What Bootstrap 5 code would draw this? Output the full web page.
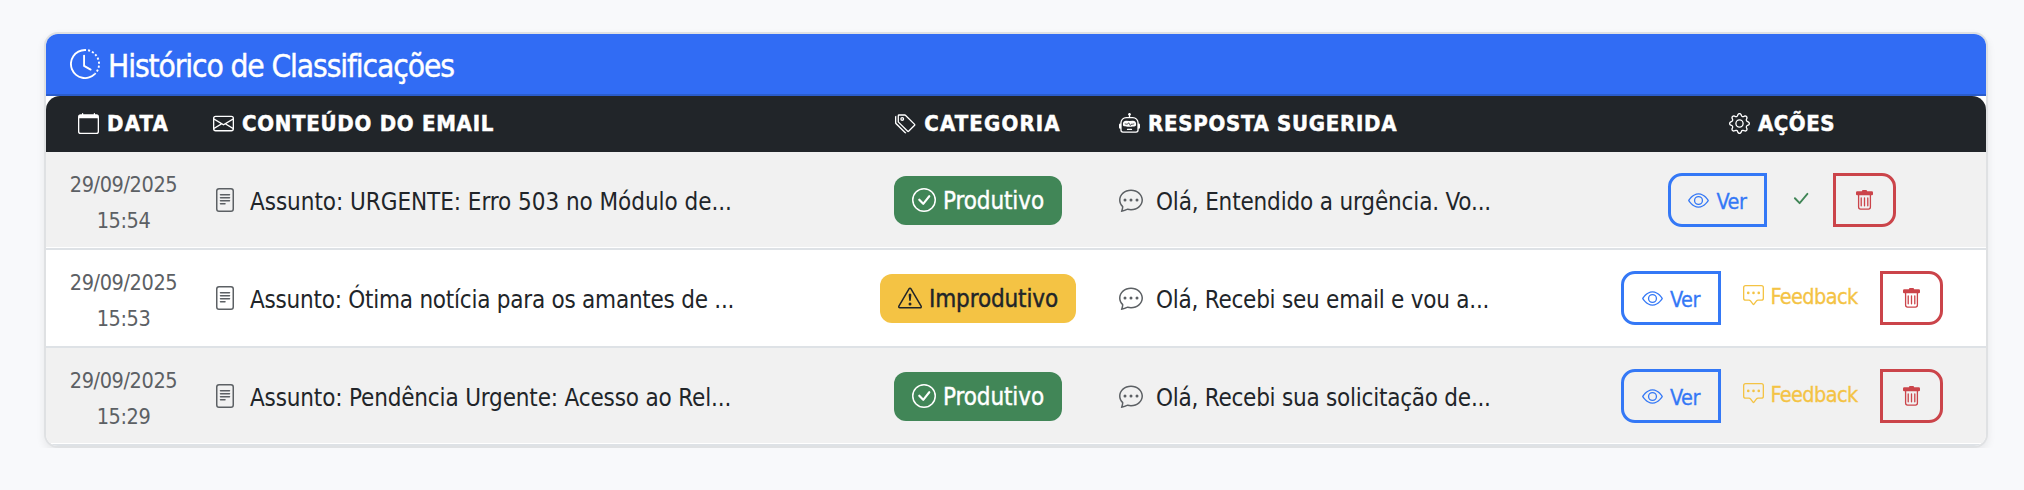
<!DOCTYPE html>
<html lang="pt-BR">
<head>
<meta charset="utf-8">
<meta name="viewport" content="width=device-width, initial-scale=1">
<title>Histórico de Classificações</title>
<link href="https://cdn.jsdelivr.net/npm/bootstrap@5.3.0/dist/css/bootstrap.min.css" rel="stylesheet">
<style>
body{background:#f8f9fb;font-family:"DejaVu Sans Condensed","DejaVu Sans",sans-serif;color:#212529;padding:32px 36px 0 44px}
.history{width:1944px;border:2px solid #dfe1e3;border-radius:14px;overflow:hidden;background:#fff;box-shadow:0 4px 8px rgba(0,0,0,.075)}
.history>.card-header{height:62px;padding:0 0 0 24px;background:#316cf4;border-bottom:2px solid #2b5dcb;border-radius:0;font-size:31.5px;line-height:60px;letter-spacing:-1.14px;-webkit-text-stroke:.4px}
.history .table{table-layout:fixed;width:1940px;line-height:36px;border-collapse:separate;border-spacing:0}
.history th{height:56px;padding:0 12px;background:#212529;color:#fff;border:0;font-size:22px;line-height:56px;white-space:nowrap;-webkit-text-stroke:.5px}
.history th:first-child{border-top-left-radius:14px}
.history th:last-child{border-top-right-radius:14px}
.history td{height:98px;padding:0 12px;border-bottom:2px solid #dee2e6;font-size:24px;white-space:nowrap;background:transparent;box-shadow:none}
.history tbody tr:nth-child(odd) td{background:linear-gradient(#f1f1f1,#f1f1f1) 0 0/100% 95px no-repeat}
.history .when{font-size:21.5px;letter-spacing:-.4px;color:#5c6064;padding-top:5px}
.ico{fill:currentColor;stroke:none;flex:none;display:block}
.i21{width:21px;height:21px}
.i24{width:24px;height:24px}
.i30{width:30px;height:30px}
th .ico{margin:0 8px 2px 0}
.muted{color:#5c6064}
.entry{gap:13px}
.entry span{position:relative;top:2px}
.tag{height:49px;border-radius:12px;padding:0 18px;gap:7px;letter-spacing:-.1px;-webkit-text-stroke:.4px}
.tag span{padding-top:2px}
.tag-ok{background:#418657;color:#fff}
.tag-warn{background:#f4c344;color:#212529;letter-spacing:-.12px}
.act{height:54px;font-size:21.5px;line-height:48px;gap:7px;border:3px solid;padding:0;letter-spacing:-.46px}
.act span{-webkit-text-stroke:.3px;padding-top:3px}
.view{color:#3478f6;width:99px;border-radius:14px 0 0 14px}
.row-wide .view{width:100px}
.del{color:#cb444a;width:63px;border-radius:0 14px 14px 0}
.mid{color:#418657;width:66px}
.fb{color:#f4c344;width:159px;letter-spacing:-.6px;font-size:21.5px;gap:6px}
.fb span{-webkit-text-stroke:.3px;margin-top:-2px}
.fb .ico{margin-top:-5px}
.s1{letter-spacing:-.05px}.s2{letter-spacing:-.24px}.s3{letter-spacing:-.16px}.s4{letter-spacing:-.16px}
.h1x{letter-spacing:1.15px}.h2x{letter-spacing:.72px}.h3x{letter-spacing:.5px}
</style>
</head>
<body>
<svg class="d-none" xmlns="http://www.w3.org/2000/svg">
<symbol id="clock" viewBox="0 0 16 16"><path d="M8.515 1.019A7 7 0 0 0 8 1V0a8 8 0 0 1 .589.022zm2.004.45a7 7 0 0 0-.985-.299l.219-.976q.576.129 1.126.342zm1.37.71a7 7 0 0 0-.439-.27l.493-.87a8 8 0 0 1 .979.654l-.615.789a7 7 0 0 0-.418-.302zm1.834 1.79a7 7 0 0 0-.653-.796l.724-.69q.406.429.747.91zm.744 1.352a7 7 0 0 0-.214-.468l.893-.45a8 8 0 0 1 .45 1.088l-.95.313a7 7 0 0 0-.179-.483m.53 2.507a7 7 0 0 0-.1-1.025l.985-.17q.1.58.116 1.17zm-.131 1.538q.05-.254.081-.51l.993.123a8 8 0 0 1-.23 1.155l-.964-.267q.069-.247.12-.501m-.952 2.379q.276-.436.486-.908l.914.405q-.24.54-.555 1.038zm-.964 1.205q.183-.183.35-.378l.758.653a8 8 0 0 1-.401.432z"/><path d="M8 1a7 7 0 1 0 4.95 11.95l.707.707A8.001 8.001 0 1 1 8 0z"/><path d="M7.5 3a.5.5 0 0 1 .5.5v5.21l3.248 1.856a.5.5 0 0 1-.496.868l-3.5-2A.5.5 0 0 1 7 9V3.5a.5.5 0 0 1 .5-.5"/></symbol>
<symbol id="calendar" viewBox="0 0 16 16"><path d="M3.5 0a.5.5 0 0 1 .5.5V1h8V.5a.5.5 0 0 1 1 0V1h1a2 2 0 0 1 2 2v11a2 2 0 0 1-2 2H2a2 2 0 0 1-2-2V3a2 2 0 0 1 2-2h1V.5a.5.5 0 0 1 .5-.5M1 4v10a1 1 0 0 0 1 1h12a1 1 0 0 0 1-1V4z"/></symbol>
<symbol id="envelope" viewBox="0 0 16 16"><path d="M0 4a2 2 0 0 1 2-2h12a2 2 0 0 1 2 2v8a2 2 0 0 1-2 2H2a2 2 0 0 1-2-2zm2-1a1 1 0 0 0-1 1v.217l7 4.2 7-4.2V4a1 1 0 0 0-1-1zm13 2.383-4.708 2.825L15 11.105zm-.034 6.876-5.64-3.471L8 9.583l-1.326-.795-5.64 3.47A1 1 0 0 0 2 13h12a1 1 0 0 0 .966-.741M1 11.105l4.708-2.897L1 5.383z"/></symbol>
<symbol id="tags" viewBox="0 0 16 16"><path d="M3 2v4.586l7 7L14.586 9l-7-7zM2 2a1 1 0 0 1 1-1h4.586a1 1 0 0 1 .707.293l7 7a1 1 0 0 1 0 1.414l-4.586 4.586a1 1 0 0 1-1.414 0l-7-7A1 1 0 0 1 2 6.586z"/><path d="M5.5 5a.5.5 0 1 1 0-1 .5.5 0 0 1 0 1m0 1a1.5 1.5 0 1 0 0-3 1.5 1.5 0 0 0 0 3M1 7.086a1 1 0 0 0 .293.707L8.75 15.25l-.043.043a1 1 0 0 1-1.414 0l-7-7A1 1 0 0 1 0 7.586V3a1 1 0 0 1 1-1z"/></symbol>
<symbol id="robot" viewBox="0 0 16 16"><path d="M6 12.5a.5.5 0 0 1 .5-.5h3a.5.5 0 0 1 0 1h-3a.5.5 0 0 1-.5-.5M3 8.062C3 6.76 4.235 5.765 5.53 5.886a26.6 26.6 0 0 0 4.94 0C11.765 5.765 13 6.76 13 8.062v1.157a.93.93 0 0 1-.765.935c-.845.147-2.34.346-4.235.346s-3.39-.2-4.235-.346A.93.93 0 0 1 3 9.219zm4.542-.827a.25.25 0 0 0-.217.068l-.92.9a25 25 0 0 1-1.871-.183.25.25 0 0 0-.068.495c.55.076 1.232.149 2.02.193a.25.25 0 0 0 .189-.071l.754-.736.847 1.71a.25.25 0 0 0 .404.062l.932-.97a25 25 0 0 0 1.922-.188.25.25 0 0 0-.068-.495c-.538.074-1.207.145-1.98.189a.25.25 0 0 0-.166.076l-.754.785-.842-1.7a.25.25 0 0 0-.182-.135"/><path d="M8.5 1.866a1 1 0 1 0-1 0V3h-2A4.5 4.5 0 0 0 1 7.5V8a1 1 0 0 0-1 1v2a1 1 0 0 0 1 1v1a2 2 0 0 0 2 2h10a2 2 0 0 0 2-2v-1a1 1 0 0 0 1-1V9a1 1 0 0 0-1-1v-.5A4.5 4.5 0 0 0 10.5 3h-2zM14 7.5V13a1 1 0 0 1-1 1H3a1 1 0 0 1-1-1V7.5A3.5 3.5 0 0 1 5.5 4h5A3.5 3.5 0 0 1 14 7.5"/></symbol>
<symbol id="gear" viewBox="0 0 16 16"><path d="M8 4.754a3.246 3.246 0 1 0 0 6.492 3.246 3.246 0 0 0 0-6.492M5.754 8a2.246 2.246 0 1 1 4.492 0 2.246 2.246 0 0 1-4.492 0"/><path d="M9.796 1.343c-.527-1.79-3.065-1.79-3.592 0l-.094.319a.873.873 0 0 1-1.255.52l-.292-.16c-1.64-.892-3.433.902-2.54 2.541l.159.292a.873.873 0 0 1-.52 1.255l-.319.094c-1.79.527-1.79 3.065 0 3.592l.319.094a.873.873 0 0 1 .52 1.255l-.16.292c-.892 1.64.901 3.434 2.541 2.54l.292-.159a.873.873 0 0 1 1.255.52l.094.319c.527 1.79 3.065 1.79 3.592 0l.094-.319a.873.873 0 0 1 1.255-.52l.292.16c1.64.893 3.434-.902 2.54-2.541l-.159-.292a.873.873 0 0 1 .52-1.255l.319-.094c1.79-.527 1.79-3.065 0-3.592l-.319-.094a.873.873 0 0 1-.52-1.255l.16-.292c.893-1.64-.902-3.433-2.541-2.54l-.292.159a.873.873 0 0 1-1.255-.52zm-2.633.283c.246-.835 1.428-.835 1.674 0l.094.319a1.873 1.873 0 0 0 2.693 1.115l.291-.16c.764-.415 1.6.42 1.184 1.185l-.159.292a1.873 1.873 0 0 0 1.116 2.692l.318.094c.835.246.835 1.428 0 1.674l-.319.094a1.873 1.873 0 0 0-1.115 2.693l.16.291c.415.764-.42 1.6-1.185 1.184l-.291-.159a1.873 1.873 0 0 0-2.693 1.116l-.094.318c-.246.835-1.428.835-1.674 0l-.094-.319a1.873 1.873 0 0 0-2.692-1.115l-.292.16c-.764.415-1.6-.42-1.184-1.185l.159-.291A1.873 1.873 0 0 0 1.945 8.93l-.319-.094c-.835-.246-.835-1.428 0-1.674l.319-.094A1.873 1.873 0 0 0 3.06 4.377l-.16-.292c-.415-.764.42-1.6 1.185-1.184l.292.159a1.873 1.873 0 0 0 2.692-1.115z"/></symbol>
<symbol id="file" viewBox="0 0 16 16"><path d="M5 4a.5.5 0 0 0 0 1h6a.5.5 0 0 0 0-1zm-.5 2.5A.5.5 0 0 1 5 6h6a.5.5 0 0 1 0 1H5a.5.5 0 0 1-.5-.5M5 8a.5.5 0 0 0 0 1h6a.5.5 0 0 0 0-1zm0 2a.5.5 0 0 0 0 1h3a.5.5 0 0 0 0-1z"/><path d="M2 2a2 2 0 0 1 2-2h8a2 2 0 0 1 2 2v12a2 2 0 0 1-2 2H4a2 2 0 0 1-2-2zm10-1H4a1 1 0 0 0-1 1v12a1 1 0 0 0 1 1h8a1 1 0 0 0 1-1V2a1 1 0 0 0-1-1"/></symbol>
<symbol id="chat" viewBox="0 0 16 16"><path d="M5 8a1 1 0 1 1-2 0 1 1 0 0 1 2 0m4 0a1 1 0 1 1-2 0 1 1 0 0 1 2 0m3 1a1 1 0 1 0 0-2 1 1 0 0 0 0 2"/><path d="m2.165 15.803.02-.004c1.83-.363 2.948-.842 3.468-1.105A9 9 0 0 0 8 15c4.418 0 8-3.134 8-7s-3.582-7-8-7-8 3.134-8 7c0 1.76.743 3.37 1.97 4.6a10.4 10.4 0 0 1-.524 2.318l-.003.011a11 11 0 0 1-.244.637c-.079.186.074.394.273.362a22 22 0 0 0 .693-.125m.8-3.108a1 1 0 0 0-.287-.801C1.618 10.83 1 9.468 1 8c0-3.192 3.004-6 7-6s7 2.808 7 6-3.004 6-7 6a8 8 0 0 1-2.088-.272 1 1 0 0 0-.711.074c-.387.196-1.24.57-2.634.893a11 11 0 0 0 .398-2"/></symbol>
<symbol id="ok" viewBox="0 0 16 16"><path d="M8 15A7 7 0 1 1 8 1a7 7 0 0 1 0 14m0 1A8 8 0 1 0 8 0a8 8 0 0 0 0 16"/><path d="m10.97 4.97-.02.022-3.473 4.425-2.093-2.094a.75.75 0 0 0-1.06 1.06L6.97 11.03a.75.75 0 0 0 1.079-.02l3.992-4.99a.75.75 0 0 0-1.071-1.05"/></symbol>
<symbol id="warn" viewBox="0 0 16 16"><path d="M7.938 2.016A.13.13 0 0 1 8.002 2a.13.13 0 0 1 .063.016.15.15 0 0 1 .054.057l6.857 11.667c.036.06.035.124.002.183a.2.2 0 0 1-.054.06.1.1 0 0 1-.066.017H1.146a.1.1 0 0 1-.066-.017.2.2 0 0 1-.054-.06.18.18 0 0 1 .002-.183L7.884 2.073a.15.15 0 0 1 .054-.057m1.044-.45a1.13 1.13 0 0 0-1.96 0L.165 13.233c-.457.778.091 1.767.98 1.767h13.713c.889 0 1.438-.99.98-1.767z"/><path d="M7.002 12a1 1 0 1 1 2 0 1 1 0 0 1-2 0M7.1 5.995a.905.905 0 1 1 1.8 0l-.35 3.507a.552.552 0 0 1-1.1 0z"/></symbol>
<symbol id="eye" viewBox="0 0 16 16"><path d="M16 8s-3-5.5-8-5.5S0 8 0 8s3 5.5 8 5.5S16 8 16 8M1.173 8a13 13 0 0 1 1.66-2.043C4.12 4.668 5.88 3.5 8 3.5s3.879 1.168 5.168 2.457A13 13 0 0 1 14.828 8q-.086.13-.195.288c-.335.48-.83 1.12-1.465 1.755C11.879 11.332 10.119 12.5 8 12.5s-3.879-1.168-5.168-2.457A13 13 0 0 1 1.172 8z"/><path d="M8 5.5a2.5 2.5 0 1 0 0 5 2.5 2.5 0 0 0 0-5M4.5 8a3.5 3.5 0 1 1 7 0 3.5 3.5 0 0 1-7 0"/></symbol>
<symbol id="feedback" viewBox="0 0 16 16"><path d="M14 1a1 1 0 0 1 1 1v8a1 1 0 0 1-1 1h-2.5a2 2 0 0 0-1.6.8L8 14.333 6.1 11.8a2 2 0 0 0-1.6-.8H2a1 1 0 0 1-1-1V2a1 1 0 0 1 1-1zM2 0a2 2 0 0 0-2 2v8a2 2 0 0 0 2 2h2.5a1 1 0 0 1 .8.4l1.9 2.533a1 1 0 0 0 1.6 0l1.9-2.533a1 1 0 0 1 .8-.4H14a2 2 0 0 0 2-2V2a2 2 0 0 0-2-2z"/><path d="M5 6a1 1 0 1 1-2 0 1 1 0 0 1 2 0m4 0a1 1 0 1 1-2 0 1 1 0 0 1 2 0m4 0a1 1 0 1 1-2 0 1 1 0 0 1 2 0"/></symbol>
<symbol id="check" viewBox="0 0 16 16"><path d="M12.736 3.97a.733.733 0 0 1 1.047 0c.286.289.29.756.01 1.05L7.88 12.01a.733.733 0 0 1-1.065.02L3.217 8.384a.757.757 0 0 1 0-1.06.733.733 0 0 1 1.047 0l3.052 3.093 5.4-6.425z"/></symbol>
<symbol id="trash" viewBox="0 0 16 16"><path d="M5.5 5.5A.5.5 0 0 1 6 6v6a.5.5 0 0 1-1 0V6a.5.5 0 0 1 .5-.5m2.5 0a.5.5 0 0 1 .5.5v6a.5.5 0 0 1-1 0V6a.5.5 0 0 1 .5-.5m3 .5a.5.5 0 0 0-1 0v6a.5.5 0 0 0 1 0z"/><path d="M14.5 3a1 1 0 0 1-1 1H13v9a2 2 0 0 1-2 2H5a2 2 0 0 1-2-2V4h-.5a1 1 0 0 1-1-1V2a1 1 0 0 1 1-1H6a1 1 0 0 1 1-1h2a1 1 0 0 1 1 1h3.5a1 1 0 0 1 1 1zM4.118 4 4 4.059V13a1 1 0 0 0 1 1h6a1 1 0 0 0 1-1V4.059L11.882 4z"/></symbol>
</svg>

<div class="card history">
  <div class="card-header text-white d-flex align-items-center">
    <svg class="ico i30 me-2"><use href="#clock"/></svg><span class="pt-1">Histórico de Classificações</span>
  </div>
  <table class="table mb-0 align-middle">
    <colgroup><col width="155"><col width="648"><col width="258"><col width="471"><col width="408"></colgroup>
    <thead>
      <tr>
        <th><div class="d-flex align-items-center justify-content-center h1x"><svg class="ico i21"><use href="#calendar"/></svg>DATA</div></th>
        <th><div class="d-flex align-items-center h2x"><svg class="ico i21"><use href="#envelope"/></svg>CONTEÚDO DO EMAIL</div></th>
        <th><div class="d-flex align-items-center justify-content-center h1x"><svg class="ico i21"><use href="#tags"/></svg>CATEGORIA</div></th>
        <th><div class="d-flex align-items-center h2x"><svg class="ico i21"><use href="#robot"/></svg>RESPOSTA SUGERIDA</div></th>
        <th><div class="d-flex align-items-center justify-content-center h3x"><svg class="ico i21"><use href="#gear"/></svg>AÇÕES</div></th>
      </tr>
    </thead>
    <tbody>
      <tr>
        <td class="when text-center">29/09/2025<br>15:54</td>
        <td><div class="d-flex align-items-center entry s1"><svg class="ico i24 muted"><use href="#file"/></svg><span>Assunto: URGENTE: Erro 503 no Módulo de...</span></div></td>
        <td><div class="d-flex justify-content-center"><div class="d-flex align-items-center tag tag-ok"><svg class="ico i24"><use href="#ok"/></svg><span>Produtivo</span></div></div></td>
        <td><div class="d-flex align-items-center entry s4"><svg class="ico i24 muted"><use href="#chat"/></svg><span>Olá, Entendido a urgência. Vo...</span></div></td>
        <td><div class="d-flex justify-content-center">
          <a class="btn act view d-flex align-items-center justify-content-center"><svg class="ico i21"><use href="#eye"/></svg><span>Ver</span></a>
          <div class="mid d-flex align-items-center justify-content-center"><svg class="ico i21 mb-1"><use href="#check"/></svg></div>
          <a class="btn act del d-flex align-items-center justify-content-center"><svg class="ico i21"><use href="#trash"/></svg></a>
        </div></td>
      </tr>
      <tr class="row-wide">
        <td class="when text-center">29/09/2025<br>15:53</td>
        <td><div class="d-flex align-items-center entry s2"><svg class="ico i24 muted"><use href="#file"/></svg><span>Assunto: Ótima notícia para os amantes de ...</span></div></td>
        <td><div class="d-flex justify-content-center"><div class="d-flex align-items-center tag tag-warn"><svg class="ico i24"><use href="#warn"/></svg><span>Improdutivo</span></div></div></td>
        <td><div class="d-flex align-items-center entry s2"><svg class="ico i24 muted"><use href="#chat"/></svg><span>Olá, Recebi seu email e vou a...</span></div></td>
        <td><div class="d-flex justify-content-center">
          <a class="btn act view d-flex align-items-center justify-content-center"><svg class="ico i21"><use href="#eye"/></svg><span>Ver</span></a>
          <div class="fb d-flex align-items-center justify-content-center"><svg class="ico i21"><use href="#feedback"/></svg><span>Feedback</span></div>
          <a class="btn act del d-flex align-items-center justify-content-center"><svg class="ico i21"><use href="#trash"/></svg></a>
        </div></td>
      </tr>
      <tr class="row-wide">
        <td class="when text-center">29/09/2025<br>15:29</td>
        <td><div class="d-flex align-items-center entry s3"><svg class="ico i24 muted"><use href="#file"/></svg><span>Assunto: Pendência Urgente: Acesso ao Rel...</span></div></td>
        <td><div class="d-flex justify-content-center"><div class="d-flex align-items-center tag tag-ok"><svg class="ico i24"><use href="#ok"/></svg><span>Produtivo</span></div></div></td>
        <td><div class="d-flex align-items-center entry s2"><svg class="ico i24 muted"><use href="#chat"/></svg><span>Olá, Recebi sua solicitação de...</span></div></td>
        <td><div class="d-flex justify-content-center">
          <a class="btn act view d-flex align-items-center justify-content-center"><svg class="ico i21"><use href="#eye"/></svg><span>Ver</span></a>
          <div class="fb d-flex align-items-center justify-content-center"><svg class="ico i21"><use href="#feedback"/></svg><span>Feedback</span></div>
          <a class="btn act del d-flex align-items-center justify-content-center"><svg class="ico i21"><use href="#trash"/></svg></a>
        </div></td>
      </tr>
    </tbody>
  </table>
</div>
<script src="https://cdn.jsdelivr.net/npm/bootstrap@5.3.0/dist/js/bootstrap.bundle.min.js"></script>
</body>
</html>
